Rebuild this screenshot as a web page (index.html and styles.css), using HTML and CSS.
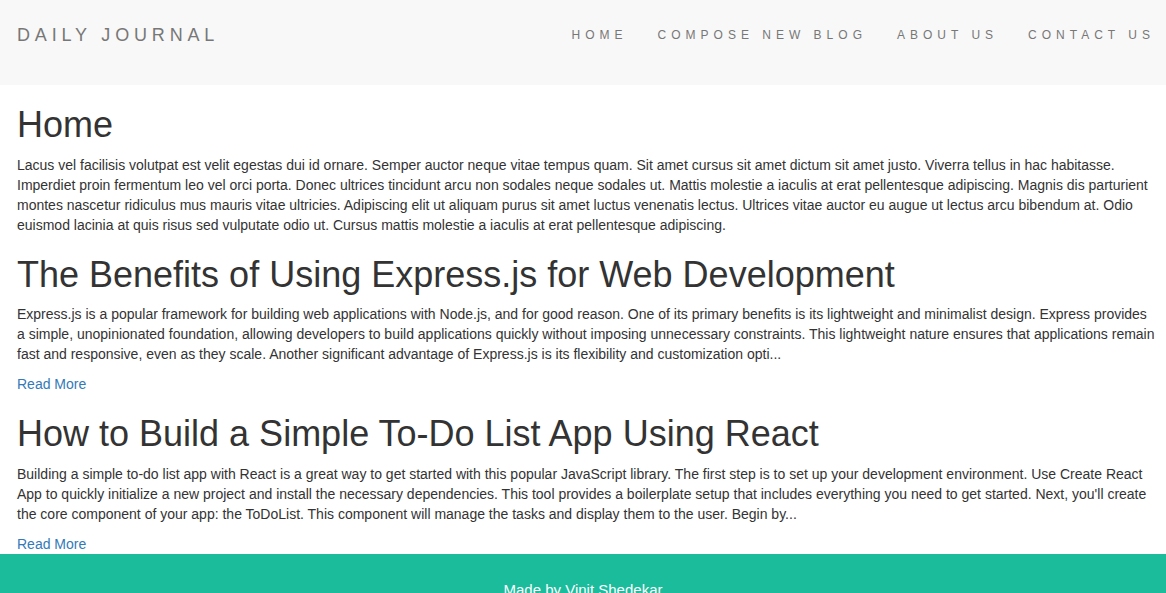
FILE: index.html
```html
<!DOCTYPE html>
<html lang="en">
<head>
<meta charset="utf-8">
<title>Daily Journal</title>
<link rel="stylesheet" href="styles.css">
</head>
<body>
<nav class="navbar">
  <div class="navbar-inner">
    <a class="brand" href="#">DAILY JOURNAL</a>
    <ul class="nav-links">
      <li><a href="#">HOME</a></li>
      <li><a href="#">COMPOSE NEW BLOG</a></li>
      <li><a href="#">ABOUT US</a></li>
      <li><a href="#">CONTACT US</a></li>
    </ul>
  </div>
</nav>
<main class="container">
  <h1>Home</h1>
  <p>Lacus vel facilisis volutpat est velit egestas dui id ornare. Semper auctor neque vitae tempus quam. Sit amet cursus sit amet dictum sit amet justo. Viverra tellus in hac habitasse. Imperdiet proin fermentum leo vel orci porta. Donec ultrices tincidunt arcu non sodales neque sodales ut. Mattis molestie a iaculis at erat pellentesque adipiscing. Magnis dis parturient montes nascetur ridiculus mus mauris vitae ultricies. Adipiscing elit ut aliquam purus sit amet luctus venenatis lectus. Ultrices vitae auctor eu augue ut lectus arcu bibendum at. Odio euismod lacinia at quis risus sed vulputate odio ut. Cursus mattis molestie a iaculis at erat pellentesque adipiscing.</p>

  <h1>The Benefits of Using Express.js for Web Development</h1>
  <p>Express.js is a popular framework for building web applications with Node.js, and for good reason. One of its primary benefits is its lightweight and minimalist design. Express provides a simple, unopinionated foundation, allowing developers to build applications quickly without imposing unnecessary constraints. This lightweight nature ensures that applications remain fast and responsive, even as they scale. Another significant advantage of Express.js is its flexibility and customization opti...</p>
  <div class="more"><a href="#">Read More</a></div>

  <h1>How to Build a Simple To-Do List App Using React</h1>
  <p>Building a simple to-do list app with React is a great way to get started with this popular JavaScript library. The first step is to set up your development environment. Use Create React App to quickly initialize a new project and install the necessary dependencies. This tool provides a boilerplate setup that includes everything you need to get started. Next, you'll create the core component of your app: the ToDoList. This component will manage the tasks and display them to the user. Begin by...</p>
  <div class="more"><a href="#">Read More</a></div>
</main>
<footer class="footer">
  <p>Made by Vinit Shedekar</p>
</footer>
</body>
</html>
```
FILE: styles.css
```css
* { box-sizing: border-box; }
html, body {
  margin: 0;
  padding: 0;
}
body {
  font-family: "Liberation Sans", Arial, Helvetica, sans-serif;
  font-size: 14px;
  line-height: 20px;
  color: #333;
  background: #fff;
}
a { color: #337ab7; text-decoration: none; }

.navbar {
  background: #f8f8f8;
  height: 85px;
  margin-bottom: 20px;
}
.navbar-inner {
  display: flex;
  justify-content: space-between;
  align-items: center;
  height: 70px;
  padding: 0 0 0 17px;
}
.brand {
  color: #777;
  font-size: 18px;
  letter-spacing: 4.83px;
  line-height: 20px;
}
.nav-links {
  list-style: none;
  margin: 0;
  padding: 0;
  display: flex;
}
.nav-links a {
  display: block;
  color: #777;
  font-size: 12px;
  letter-spacing: 5px;
  padding: 0 15px;
  line-height: 20px;
}
.nav-links li:last-child a { padding-right: 11px; }

.container {
  padding: 0 10px 0 17px;
}
h1 {
  font-family: inherit;
  font-weight: 500;
  font-size: 36px;
  line-height: 1.1;
  margin: 20px 0 10px;
  color: #333;
}
p { margin: 0 0 10px; }
.more { line-height: 20px; }

.footer {
  background: #1abc9c;
  color: #fff;
  text-align: center;
  padding: 25px 0 20px;
}
.footer p {
  margin: 0;
  font-size: 15px;
  line-height: 22px;
}
```
